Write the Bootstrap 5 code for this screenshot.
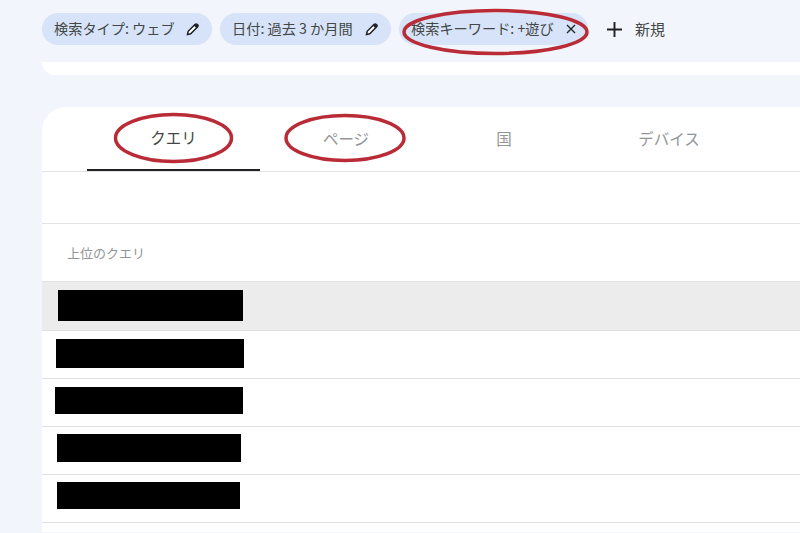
<!DOCTYPE html>
<html lang="ja">
<head>
<meta charset="utf-8">
<title>検索パフォーマンス</title>
<link href="https://cdn.jsdelivr.net/npm/bootstrap@5.3.0/dist/css/bootstrap.min.css" rel="stylesheet">
<style>
html, body { height: 533px; overflow: hidden; }
body { background: #f2f5fb; font-family: "Noto Sans CJK JP", "Liberation Sans", sans-serif; color: #444746; position: relative; }
.page-wrap { padding-left: 42px; }
.chip-bar { height: 62px; padding-top: 13px; gap: 8px; }
.filter-chip { height: 32px; border-radius: 16px; background: #d6e3f8; font-size: 14.2px; padding: 0 12px 0 12px; white-space: nowrap; flex: none; }
.chip-a { width: 170px; }
.chip-b { width: 171px; }
.chip-c { width: 189px; }
.filter-chip svg { flex: none; }
.chip-new { font-size: 15px; gap: 13px; margin-left: 11px; height: 32px; flex: none; }
.sliver { height: 13px; background: #fff; border-radius: 0 0 0 18px; }
.result-card { margin-top: 32px; background: #fff; border-radius: 24px 0 0 0; }
.tab-row { height: 65px; padding-left: 45px; border-bottom: 1px solid #e3e3e3; }
.tab-item { height: 64px; font-size: 15.5px; color: #919598; flex: none; }
.tab-one { width: 173px; color: #444746; border-bottom: 2px solid #202124; }
.tab-two { width: 172px; }
.tab-three { width: 144px; }
.tab-four { width: 186px; }
.blank-row { height: 52px; border-bottom: 1px solid #e3e3e3; }
.head-row { height: 57px; padding-left: 25px; font-size: 13px; color: #919598; }
.data-row { height: 48px; border-top: 1px solid #e0e0e0; }
.row-hi { height: 49px; background: #ececec; border-top: 1px solid #e3e3e3; }
.row-end { height: 10px; }
.redact { background: #000; }
.r1 { width: 185px; height: 31px; margin-left: 16px; margin-top: 8px; }
.r2 { width: 188px; height: 29px; margin-left: 14px; margin-top: 8px; }
.r3 { width: 188px; height: 27px; margin-left: 13px; margin-top: 8px; }
.r4 { width: 184px; height: 28px; margin-left: 15px; margin-top: 7px; }
.r5 { width: 183px; height: 27px; margin-left: 15px; margin-top: 7px; }
.ink-layer { position: absolute; left: 0; top: 0; width: 800px; height: 533px; pointer-events: none; }
</style>
</head>
<body>
<div class="page-wrap">
  <div class="chip-bar d-flex align-items-start">
    <div class="filter-chip chip-a d-flex align-items-center justify-content-between">
      <span>検索タイプ: ウェブ</span>
      <svg width="14" height="14" viewBox="0 0 14 14"><path d="M1.5 12.5l.7-3.2 7-7a1.3 1.3 0 0 1 1.9 0l.6.6a1.3 1.3 0 0 1 0 1.9l-7 7z" fill="#fff" stroke="#202124" stroke-width="1.5"/><path d="M7.8 3.6l2.6 2.6 1.2-1.3a1.3 1.3 0 0 0 0-1.9l-.6-.6a1.3 1.3 0 0 0-1.9 0z" fill="#202124"/></svg>
    </div>
    <div class="filter-chip chip-b d-flex align-items-center justify-content-between">
      <span>日付: 過去 3 か月間</span>
      <svg width="14" height="14" viewBox="0 0 14 14"><path d="M1.5 12.5l.7-3.2 7-7a1.3 1.3 0 0 1 1.9 0l.6.6a1.3 1.3 0 0 1 0 1.9l-7 7z" fill="#fff" stroke="#202124" stroke-width="1.5"/><path d="M7.8 3.6l2.6 2.6 1.2-1.3a1.3 1.3 0 0 0 0-1.9l-.6-.6a1.3 1.3 0 0 0-1.9 0z" fill="#202124"/></svg>
    </div>
    <div class="filter-chip chip-c d-flex align-items-center justify-content-between">
      <span>検索キーワード: +遊び</span>
      <svg width="10" height="10" viewBox="0 0 10 10"><path d="M1 1l8 8M9 1l-8 8" stroke="#202124" stroke-width="1.3" fill="none"/></svg>
    </div>
    <div class="chip-new d-flex align-items-center">
      <svg width="15" height="15" viewBox="0 0 14 14"><path d="M7 0v14M0 7h14" stroke="#202124" stroke-width="1.8" fill="none"/></svg>
      <span>新規</span>
    </div>
  </div>
  <div class="sliver"></div>
  <div class="result-card">
    <div class="tab-row d-flex">
      <div class="tab-item tab-one d-flex align-items-center justify-content-center">クエリ</div>
      <div class="tab-item tab-two d-flex align-items-center justify-content-center">ページ</div>
      <div class="tab-item tab-three d-flex align-items-center justify-content-center">国</div>
      <div class="tab-item tab-four d-flex align-items-center justify-content-center">デバイス</div>
    </div>
    <div class="blank-row"></div>
    <div class="head-row d-flex align-items-center">上位のクエリ</div>
    <div class="data-row row-hi"><div class="redact r1"></div></div>
    <div class="data-row"><div class="redact r2"></div></div>
    <div class="data-row"><div class="redact r3"></div></div>
    <div class="data-row"><div class="redact r4"></div></div>
    <div class="data-row"><div class="redact r5"></div></div>
    <div class="data-row row-end"></div>
  </div>
</div>
<svg class="ink-layer" viewBox="0 0 800 533">
  <g fill="none" stroke="#b92b36" stroke-width="3.5">
    <ellipse cx="495.5" cy="32" rx="91.5" ry="21.5"/>
    <ellipse cx="173.5" cy="138" rx="58" ry="23.5"/>
    <ellipse cx="345" cy="138" rx="59" ry="22.5"/>
  </g>
</svg>
<script src="https://cdn.jsdelivr.net/npm/bootstrap@5.3.0/dist/js/bootstrap.bundle.min.js"></script>
</body>
</html>
